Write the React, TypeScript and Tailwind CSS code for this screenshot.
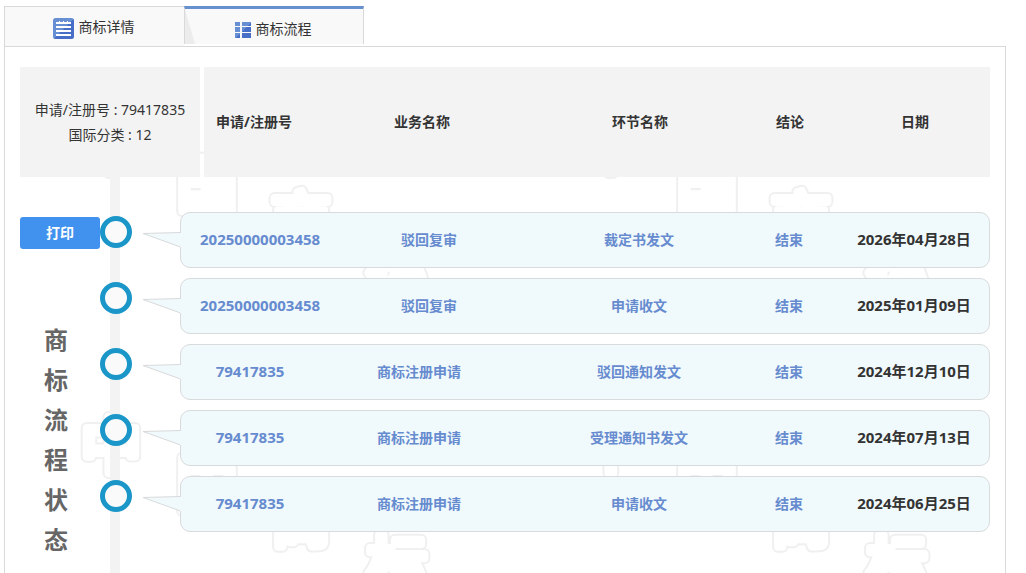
import React from 'react';

interface FlowRecord {
  no: string;
  business: string;
  step: string;
  result: string;
  date: string;
}

const records: FlowRecord[] = [
  { no: '20250000003458', business: '驳回复审', step: '裁定书发文', result: '结束', date: '2026年04月28日' },
  { no: '20250000003458', business: '驳回复审', step: '申请收文', result: '结束', date: '2025年01月09日' },
  { no: '79417835', business: '商标注册申请', step: '驳回通知发文', result: '结束', date: '2024年12月10日' },
  { no: '79417835', business: '商标注册申请', step: '受理通知书发文', result: '结束', date: '2024年07月13日' },
  { no: '79417835', business: '商标注册申请', step: '申请收文', result: '结束', date: '2024年06月25日' },
];

const watermark = [
  { char: '中', x: 106, y: 121 },
  { char: '国', x: 202, y: 159 },
  { char: '商', x: 296, y: 195 },
  { char: '标', x: 392, y: 239 },
];

function DetailIcon() {
  return (
    <svg width="21" height="21" viewBox="0 0 21 21" aria-hidden="true">
      <defs>
        <linearGradient id="detail-fill" x1="0" y1="0" x2="1" y2="1">
          <stop offset="0.5" stopColor="#668fd4" />
          <stop offset="0.52" stopColor="#476fc7" />
        </linearGradient>
      </defs>
      <rect width="21" height="21" rx="2.5" fill="url(#detail-fill)" />
      <path d="M3 4h15v2H3zM3 8h15v2H3zM3 12h15v2H3zM3 16h15v2H3z" fill="#fff" />
      <path d="M6 3h1v1H6zM10 3h1v1h-1zM14 3h1v1h-1z" fill="#fff" />
    </svg>
  );
}

function FlowIcon() {
  return (
    <svg width="16" height="16" viewBox="0 0 16 16" aria-hidden="true">
      <defs>
        <linearGradient id="flow-fill" gradientUnits="userSpaceOnUse" x1="0" y1="0" x2="16" y2="16">
          <stop offset="0.5" stopColor="#668fd4" />
          <stop offset="0.54" stopColor="#476fc7" />
        </linearGradient>
      </defs>
      <path
        d="M0 0h5v4H0zM7 0h9v4H7zM0 5h5v5H0zM7 5h9v5H7zM0 11h5v5H0zM7 11h9v5H7z"
        fill="url(#flow-fill)"
      />
    </svg>
  );
}

function Watermark() {
  return (
    <svg className="absolute inset-0 size-full" aria-hidden="true">
      <defs>
        <pattern id="watermark" width="500" height="300" patternUnits="userSpaceOnUse">
          <g fontSize="60" fontWeight="400" textAnchor="middle" strokeLinejoin="round">
            {watermark.map(({ char, x, y }) => (
              <g key={char}>
                <text x={x} y={y} fill="#f0f0f0" stroke="#f0f0f0" strokeWidth="12">{char}</text>
                <text x={x} y={y} fill="#fff" stroke="#fff" strokeWidth="8">{char}</text>
              </g>
            ))}
          </g>
        </pattern>
      </defs>
      <rect width="100%" height="100%" fill="url(#watermark)" />
    </svg>
  );
}

function TimelineMarker() {
  return (
    <>
      <span className="absolute top-[3px] -left-[81px] size-8 rounded-full border-5 border-[#1a97c8] bg-[#fafafa]" />
      {/* Bubble tail */}
      <svg className="absolute top-[18px] -left-[39px]" width="40" height="18" viewBox="0 0 40 18" aria-hidden="true">
        <path d="M38.5 1.5L1 2.5L38.5 16" fill="#f0f9fc" stroke="#d9dadb" />
        <path d="M39 2v14" stroke="#f0f9fc" strokeWidth="2" />
      </svg>
    </>
  );
}

function FlowRow({ record }: { record: FlowRecord }) {
  return (
    <tr className="relative flex h-14 items-center rounded-[10px] border border-[#d9dadb] bg-[#f0f9fc] text-[#668bcf]">
      <td className="min-w-[138px] px-[19px] text-[15px]">
        <TimelineMarker />
        <a href="#">{record.no}</a>
      </td>
      <td className="mr-5 flex-1"><a href="#">{record.business}</a></td>
      <td className="w-[200px]"><a href="#">{record.step}</a></td>
      <td className="w-[100px]"><a href="#">{record.result}</a></td>
      <td className="w-[150px] text-[15px] text-[#333]">{record.date}</td>
    </tr>
  );
}

export default function App() {
  return (
    <div className="flex min-h-screen flex-col bg-white pt-1.5 pr-5 pl-1 font-['Noto_Sans','Noto_Sans_CJK_SC',sans-serif] text-sm text-[#333]">
      <div className="flex h-10 items-start" role="tablist">
        <button
          type="button"
          role="tab"
          aria-selected="false"
          className="flex h-10 w-[180px] items-center justify-center gap-[5px] border-t border-l border-[#d9d9d9] bg-[#f9f9f9] pt-1 pr-0.5"
        >
          <DetailIcon />
          <span className="pb-1">商标详情</span>
        </button>
        <button
          type="button"
          role="tab"
          aria-selected="true"
          className="relative flex h-[38px] w-[180px] items-center justify-center gap-[5px] border-x border-t-3 border-x-[#d9d9d9] border-t-[#6790cf] bg-[#f9f9f9] pt-1.5 pr-0.5"
        >
          <svg className="absolute top-0 left-0" width="10" height="35" viewBox="0 0 10 35" aria-hidden="true">
            <path d="M0 0L10 35H0z" fill="#ececec" />
          </svg>
          <FlowIcon />
          <span className="pb-0.5">商标流程</span>
        </button>
      </div>

      <main className="relative flex-1 border-x border-t border-[#d9d9d9] px-[15px] pt-5">
        <Watermark />
        {/* Timeline line */}
        <div className="absolute top-[130px] bottom-0 left-[105px] w-2.5 bg-[#f3f3f3]" />

        <div className="relative flex">
          <aside className="w-20 shrink-0">
            <div className="flex h-[110px] w-[180px] flex-col justify-center bg-[#f3f3f3] text-center leading-[25px]">
              <p>申请/注册号 : 79417835</p>
              <p>国际分类 : 12</p>
            </div>
            <button type="button" className="mt-10 h-8 w-20 rounded-[3px] bg-[#4191ee] font-bold text-white">
              打印
            </button>
            <h2 className="mt-[71px] ml-6 w-6 text-2xl leading-10 font-bold break-all text-[#666]">商标流程状态</h2>
          </aside>

          <table className="block flex-1 text-center font-bold">
            <thead className="ml-[104px] block bg-[#f3f3f3]">
              <tr className="flex h-[110px] items-center">
                <th className="w-[100px]">申请/注册号</th>
                <th className="flex-1">业务名称</th>
                <th className="w-[200px]">环节名称</th>
                <th className="w-[100px]">结论</th>
                <th className="w-[150px]">日期</th>
              </tr>
            </thead>
            <tbody className="mt-[35px] ml-20 flex flex-col gap-2.5">
              {records.map((record) => (
                <FlowRow key={record.date} record={record} />
              ))}
            </tbody>
          </table>
        </div>
      </main>
    </div>
  );
}
